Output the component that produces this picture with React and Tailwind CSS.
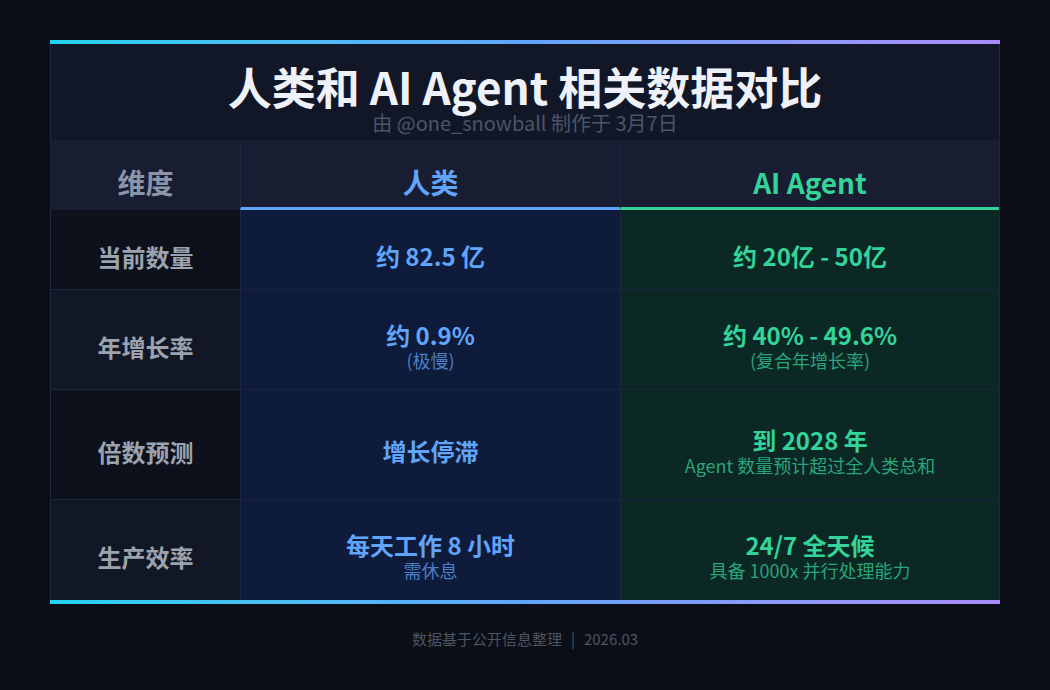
import React from 'react';

const rows = [
  {
    label: '当前数量',
    h: 'h-[80px]',
    labelBg: 'bg-[#0d111c]',
    human: { main: '约 82.5 亿' },
    agent: { main: '约 20亿 - 50亿' },
  },
  {
    label: '年增长率',
    h: 'h-[100px]',
    labelBg: 'bg-[#121725]',
    human: { main: '约 0.9%', sub: '(极慢)' },
    agent: { main: '约 40% - 49.6%', sub: '(复合年增长率)' },
  },
  {
    label: '倍数预测',
    h: 'h-[110px]',
    labelBg: 'bg-[#0d111c]',
    human: { main: '增长停滞' },
    agent: { main: '到 2028 年', sub: 'Agent 数量预计超过全人类总和' },
  },
  {
    label: '生产效率',
    h: 'h-[100px]',
    labelBg: 'bg-[#121725]',
    human: { main: '每天工作 8 小时', sub: '需休息' },
    agent: { main: '24/7 全天候', sub: '具备 1000x 并行处理能力' },
  },
];

const Cell = ({ main, sub, mainColor, subColor }) => (
  <div className="flex flex-col items-center justify-center pt-[12px]">
    <div className={`text-[24px] leading-[28px] font-bold ${mainColor}`}>{main}</div>
    {sub && <div className={`text-[18px] leading-[22px] ${subColor}`}>{sub}</div>}
  </div>
);

const App = () => {
  return (
    <div className="w-[1050px] h-[690px] bg-[#0b0e17] pt-10 px-[50px] font-['Noto_Sans_CJK_SC',sans-serif]">
      <div className="h-1 bg-linear-to-r from-[#22d3ee] via-[#60a5fa] to-[#a78bfa]" />
      <div className="border-x border-[#1e2640]">
        <div className="h-[96px] bg-[#121727] flex flex-col items-center pt-[16px]">
          <h1 className="text-[44px] leading-[52px] font-bold text-[#eef1f8]">人类和 AI Agent 相关数据对比</h1>
          <p className="text-[20px] leading-[22px] text-[#4b5568]">由 @one_snowball 制作于 3月7日</p>
        </div>

        <div className="grid grid-cols-[189px_380px_379px] h-[70px] bg-[#181d31]">
          <div className="flex items-center justify-center pt-[16px] text-[28px] font-bold text-[#8b95a9] border-b-[3px] border-[#181d31]">维度</div>
          <div className="flex items-center justify-center pt-[16px] text-[28px] font-bold text-[#60a5fa] border-l border-[#1e2640] border-b-[3px] border-b-[#60a5fa]">人类</div>
          <div className="flex items-center justify-center pt-[16px] text-[28px] font-bold text-[#34d399] border-l border-[#1e2640] border-b-[3px] border-b-[#34d399]">AI Agent</div>
        </div>

        {rows.map((row, i) => (
          <div
            key={row.label}
            className={`grid grid-cols-[189px_380px_379px] ${row.h} ${i < rows.length - 1 ? 'border-b border-[#1c2540]' : ''}`}
          >
            <div className={`flex items-center justify-center pt-[14px] text-[24px] font-bold text-[#9ca3af] ${row.labelBg}`}>
              {row.label}
            </div>
            <div className="bg-[#0f1b3a] border-l border-[#1c2540] flex justify-center">
              <Cell {...row.human} mainColor="text-[#60a5fa]" subColor="text-[#4b7fc7]" />
            </div>
            <div className="bg-[#0c2824] border-l border-[#1c2540] flex justify-center">
              <Cell {...row.agent} mainColor="text-[#34d399]" subColor="text-[#2aa47a]" />
            </div>
          </div>
        ))}
      </div>
      <div className="h-1 bg-linear-to-r from-[#22d3ee] via-[#60a5fa] to-[#a78bfa]" />

      <p className="mt-[25px] text-center text-[15px] leading-[20px] text-[#4b5563]">
        数据基于公开信息整理<span className="mx-[9px]">|</span>2026.03
      </p>
    </div>
  );
};

export default App;
